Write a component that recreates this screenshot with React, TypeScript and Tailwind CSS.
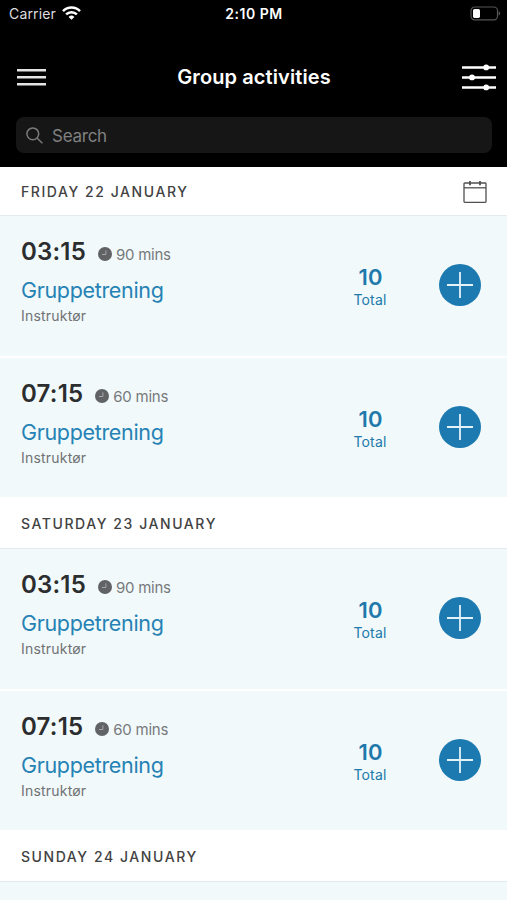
interface Activity {
  time: string
  duration: string
}

interface Day {
  label: string
  activities: Activity[]
}

const activities: Activity[] = [
  { time: '03:15', duration: '90 mins' },
  { time: '07:15', duration: '60 mins' },
]

const days: Day[] = [
  { label: 'Friday 22 January', activities },
  { label: 'Saturday 23 January', activities },
  { label: 'Sunday 24 January', activities: [] },
]

function WifiIcon() {
  return (
    <svg width="19" height="14" viewBox="0 0 19 14" fill="none" stroke="#fff" strokeWidth="2.5">
      <path d="M1 5.1a12 12 0 0 1 17 0" />
      <path d="M4.1 8.4a7.6 7.6 0 0 1 10.8 0" />
      <path d="M9.5 13.8 6.6 10.9a4.1 4.1 0 0 1 5.8 0Z" fill="#fff" stroke="none" />
    </svg>
  )
}

function BatteryIcon() {
  return (
    <svg width="31" height="15" viewBox="0 0 31 15" fill="none">
      <rect x="1" y="1" width="26.5" height="12.8" rx="3.6" stroke="#555" strokeWidth="1.2" />
      <rect x="3" y="2.9" width="7" height="9" rx="1.6" fill="#fff" />
      <path d="M28.6 5.2c2 .6 2 3.8 0 4.4Z" fill="#555" />
    </svg>
  )
}

function MenuIcon() {
  return (
    <svg width="29" height="19" viewBox="0 0 29 19" fill="#e4e4e4">
      <path d="M0 .9h29v2.5H0zM0 8h29v2.5H0zM0 15.1h29v2.5H0z" />
    </svg>
  )
}

function FiltersIcon() {
  return (
    <svg width="34" height="27" viewBox="0 0 34 27" fill="#fff">
      <path d="M0 2.2h34v2.5H0zM0 12.2h34v2.5H0zM0 22.2h34v2.5H0z" />
      <circle cx="24.2" cy="3.4" r="2.9" />
      <circle cx="10" cy="13.4" r="2.9" />
      <circle cx="24.2" cy="23.4" r="2.9" />
    </svg>
  )
}

function SearchIcon() {
  return (
    <svg width="17" height="17" viewBox="0 0 17 17" fill="none" stroke="#7a7a7a" strokeWidth="1.5">
      <circle cx="6.8" cy="6.8" r="5.9" />
      <path d="m11 11 5.4 5.2" />
    </svg>
  )
}

function CalendarIcon() {
  return (
    <svg width="24" height="23" viewBox="0 0 24 23" fill="none" stroke="#505050" strokeWidth="1.3">
      <rect x="1" y="2" width="22" height="19.4" rx="0.8" />
      <path d="M1 6.8h22" />
      <path d="M7 0v4.2M17 0v4.2" strokeWidth="1.8" />
    </svg>
  )
}

function ClockIcon() {
  return (
    <svg width="14" height="14" viewBox="0 0 14 14" fill="none">
      <circle cx="7" cy="7" r="7" fill="#606264" />
      <path d="M7.9 3.4v4.1H4" stroke="#a4a8aa" strokeWidth="1" />
    </svg>
  )
}

function ActivityCard({ time, duration }: Activity) {
  return (
    <li className="flex h-[139px] shrink-0 bg-[#f1f9fb] pl-[21px] first:h-[140px]">
      <div className="flex-1 pt-[22px]">
        <div className="flex items-start">
          <span className="text-[24px] leading-[28px] font-[560] tracking-[0.2px] text-[#2b2d2e]">{time}</span>
          <span className="mt-[9px] ml-3">
            <ClockIcon />
          </span>
          <span className="mt-[7px] ml-1 text-[15px] leading-5 tracking-[-0.25px] text-[#77797b]">{duration}</span>
        </div>
        <h2 className="mt-2 text-[21.5px] leading-8 tracking-[-0.33px] text-[#2682b4]">Gruppetrening</h2>
        <p className="text-[14px] leading-5 tracking-[0.2px] text-[#707274]">Instruktør</p>
      </div>
      <div className="w-20 pt-12 text-center text-[#2079aa]">
        <p className="pl-px text-[22px] leading-[26px] font-[560]">10</p>
        <p className="text-[14px] leading-5 tracking-[0.2px]">Total</p>
      </div>
      <button
        type="button"
        aria-label="Add"
        className="mt-12 mr-[26px] ml-[29px] h-[42px] w-[42px] rounded-full bg-[#1c7ab0]"
      >
        <svg width="42" height="42" viewBox="0 0 42 42" stroke="#e4f3f9" strokeWidth="1.8">
          <path d="M21 8v26M8 21h26" />
        </svg>
      </button>
    </li>
  )
}

export default function App() {
  return (
    <div className="flex h-[900px] w-[507px] flex-col overflow-hidden bg-white font-['Inter','Liberation_Sans',sans-serif]">
      <header className="h-[167px] shrink-0 bg-black text-white">
        <div className="grid h-7 grid-cols-3 items-center pr-[6px] pl-[9px] text-[14px] leading-5">
          <div className="flex items-center gap-[6px]">
            <span className="tracking-[0.15px] text-[#dedede]">Carrier</span>
            <span className="pb-[2px]">
              <WifiIcon />
            </span>
          </div>
          <span className="pr-[2px] text-center font-[560] tracking-[0.5px]">2:10 PM</span>
          <div className="flex justify-end pb-[2px]">
            <BatteryIcon />
          </div>
        </div>
        <div className="flex h-[89px] items-center justify-between pt-[9px] pr-[11px] pl-[17px]">
          <button type="button" aria-label="Menu">
            <MenuIcon />
          </button>
          <h1 className="text-[20px] leading-7 font-[560] tracking-[0.1px]">Group activities</h1>
          <FiltersIcon />
        </div>
        <div className="mr-[15px] ml-4 flex h-9 items-center gap-[9px] rounded-lg bg-[#161616] pl-[10px]">
          <SearchIcon />
          <span className="pt-px text-[17px] leading-6 tracking-[-0.25px] text-[#808080]">Search</span>
        </div>
      </header>
      {days.map((day, index) => (
        <section key={day.label} className="shrink-0 last:flex last:grow last:flex-col">
          <div
            className={`flex items-center justify-between border-b border-[#e3eaed] pr-5 pl-[21px] ${index === 0 ? 'h-[49px] pt-[2px]' : 'h-[52px] pt-[3px]'}`}
          >
            <h2 className="text-[14px] leading-5 font-medium tracking-[1.57px] text-[#424242] uppercase">{day.label}</h2>
            {index === 0 && <CalendarIcon />}
          </div>
          {day.activities.length > 0 ? (
            <ul className="flex flex-col gap-[2px]">
              {day.activities.map((activity) => (
                <ActivityCard key={activity.time} {...activity} />
              ))}
            </ul>
          ) : (
            <div className="grow bg-[#f1f9fb]" />
          )}
        </section>
      ))}
    </div>
  )
}
